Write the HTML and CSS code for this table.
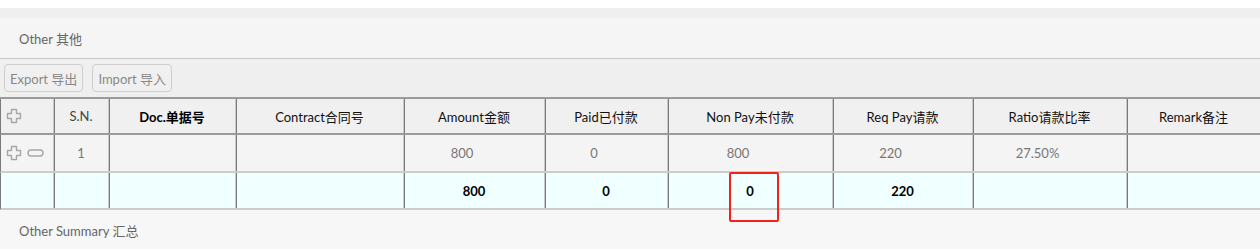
FILE: index.html
```html
<!DOCTYPE html>
<html>
<head>
<meta charset="utf-8">
<link rel="stylesheet" href="styles.css">
</head>
<body>
<div class="gap"></div>
<div class="band"></div>
<div class="section-head">Other 其他</div>
<div class="toolbar">
  <button class="btn">Export 导出</button>
  <button class="btn">Import 导入</button>
</div>
<div class="grid">
  <div class="row head">
    <div class="cell icons">
      <svg class="ico-plus" width="16" height="16" viewBox="0 0 16 16"><path d="M5.5 1.5H10.5V5.5H14.5V10.5H10.5V14.5H5.5V10.5H1.5V5.5H5.5Z"/></svg>
    </div>
    <div class="cell sn">S.N.</div>
    <div class="cell bold">Doc.单据号</div>
    <div class="cell">Contract合同号</div>
    <div class="cell">Amount金额</div>
    <div class="cell">Paid已付款</div>
    <div class="cell">Non Pay未付款</div>
    <div class="cell">Req Pay请款</div>
    <div class="cell">Ratio请款比率</div>
    <div class="cell last">Remark备注</div>
  </div>
  <div class="row data">
    <div class="cell icons">
      <svg class="ico-plus" width="16" height="16" viewBox="0 0 16 16"><path d="M5.5 1.5H10.5V5.5H14.5V10.5H10.5V14.5H5.5V10.5H1.5V5.5H5.5Z"/></svg>
      <svg class="ico-minus" width="17" height="8" viewBox="0 0 17 8"><rect x="1" y="1" width="15" height="6" rx="3"/></svg>
    </div>
    <div class="cell sn-val">1</div>
    <div class="cell"></div>
    <div class="cell"></div>
    <div class="cell num">800</div>
    <div class="cell num">0</div>
    <div class="cell num">800</div>
    <div class="cell num">220</div>
    <div class="cell num">27.50%</div>
    <div class="cell last"></div>
  </div>
  <div class="row sum">
    <div class="cell"></div>
    <div class="cell"></div>
    <div class="cell"></div>
    <div class="cell"></div>
    <div class="cell total">800</div>
    <div class="cell total">0</div>
    <div class="cell total marked">0<span class="highlight"></span></div>
    <div class="cell total">220</div>
    <div class="cell"></div>
    <div class="cell last"></div>
  </div>
</div>
<div class="footer">Other Summary 汇总</div>
</body>
</html>
```
FILE: styles.css
```css
html, body {
  margin: 0;
  padding: 0;
  background: #ffffff;
  font-family: "Segoe UI", Lato, "Noto Sans CJK SC", sans-serif;
  font-size: 13px;
  overflow: hidden;
}
.gap { height: 8px; background: #ffffff; }
.band { height: 10px; background: #efefef; }
.section-head {
  height: 40px;
  background: #f5f5f5;
  border-bottom: 1px solid #c8c8c8;
  display: flex;
  align-items: center;
  padding-left: 19px;
  color: #666;
}
.toolbar {
  height: 38px;
  background: #efefef;
  display: flex;
  align-items: center;
  gap: 9px;
  padding: 0 4px;
  box-sizing: border-box;
}
.btn {
  height: 28px;
  box-sizing: border-box;
  border: 1px solid #cfcfcf;
  border-radius: 4px;
  background: #f0f0f0;
  color: #888;
  font: inherit;
  padding: 0 5px;
}
.grid {
  border-top: 2px solid #9a9a9a;
}
.row {
  display: grid;
  grid-template-columns: 53px 55px 127px 168px 141px 123px 165px 140px 154px 1fr;
  border-left: 1px solid #7a7a7a;
}
.row.head { height: 34px; background: #f0f0f0; border-bottom: 2px solid #9a9a9a; }
.row.data { height: 36px; background: #f4f4f4; border-bottom: 2px solid #cccccc; }
.row.sum { height: 35px; background: #f0ffff; border-bottom: 2px solid #cccccc; }
.cell {
  border-right: 1px solid #c8c8c8;
  box-shadow: 1px 0 0 #7a7a7a;
  display: flex;
  align-items: center;
  justify-content: center;
  color: #111;
  white-space: nowrap;
}
.cell.last { border-right: none; box-shadow: none; }
.head .cell { color: #111; }
.cell.sn { color: #444; }
.cell.bold { font-weight: bold; color: #000; }
.cell.icons { justify-content: flex-start; padding-left: 5px; gap: 5px; }
.ico-plus path { fill: none; stroke: #a6a6a6; stroke-width: 1.4; stroke-linejoin: round; }
.ico-minus rect { fill: none; stroke: #a6a6a6; stroke-width: 1.4; }
.cell.sn-val { color: #777; }
.cell.num { color: #777; padding-right: 24px; }
.cell.total { font-weight: bold; color: #000; }
.cell.marked { position: relative; }
.highlight {
  position: absolute;
  left: 61px;
  top: -1px;
  width: 50px;
  height: 50px;
  box-sizing: border-box;
  border: 2px solid #f22218;
  border-radius: 2px;
}
.footer {
  height: 40px;
  background: #f7f7f7;
  display: flex;
  align-items: center;
  padding-left: 19px;
  color: #666;
}
```
